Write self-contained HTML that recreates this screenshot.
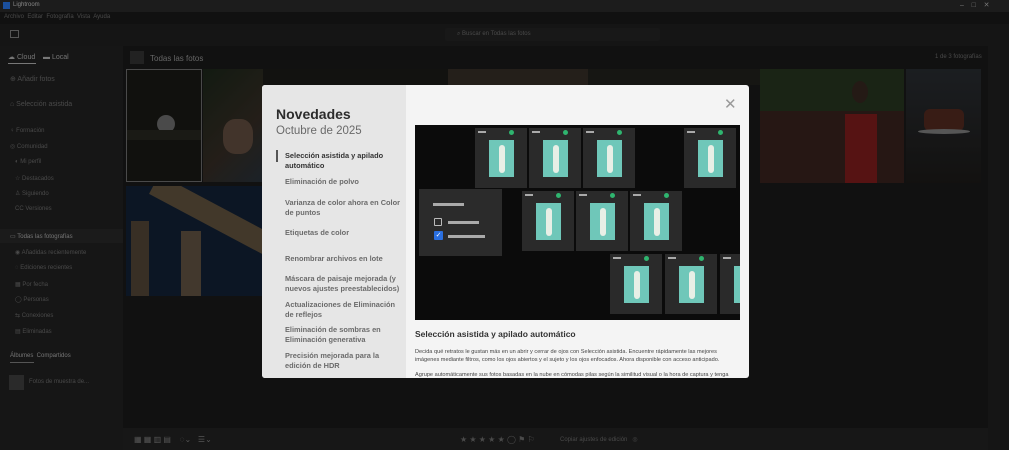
<!DOCTYPE html>
<html><head><meta charset="utf-8"><style>
*{margin:0;padding:0;box-sizing:border-box}
body{width:1009px;height:450px;overflow:hidden;background:#111;font-family:"Liberation Sans",sans-serif;position:relative}
.a{position:absolute}
.t{color:#4a4a4a;font-size:6px;white-space:nowrap}
.ph{position:absolute;overflow:hidden;filter:brightness(0.62)}
.card{position:absolute;width:52px;height:60px;background:#2a2a2a}
.card .im{position:absolute;left:14px;top:12px;width:25px;height:37px;background:#6fc7b9}
.card .im:after{content:"";position:absolute;left:10px;top:5px;width:6px;height:28px;background:#e8efe6;border-radius:3px}
.card .bar{position:absolute;left:3px;top:3px;width:8px;height:1.5px;background:#aaa}
.card .ck{position:absolute;right:13px;top:2px;width:5px;height:5px;border-radius:50%;background:#2fb56f}
.it{position:absolute;left:285px;font-size:7.4px;line-height:10px;color:#6b6b6b;font-weight:bold;width:118px}
</style></head><body>
<div class="a" style="left:0;top:0;width:1009px;height:12px;background:#1c1c1c"></div>
<div class="a" style="left:3px;top:2px;width:7px;height:7px;background:#1b4f9c"></div>
<div class="a t" style="left:13px;top:2px;color:#888">Lightroom</div>
<div class="a t" style="left:960px;top:1px;color:#777;font-size:7px">–&nbsp;&nbsp;&nbsp;&nbsp;□&nbsp;&nbsp;&nbsp;&nbsp;✕</div>
<div class="a t" style="left:4px;top:14px">Archivo&nbsp; Editar&nbsp; Fotografía&nbsp; Vista&nbsp; Ayuda</div>
<div class="a" style="left:0;top:24px;width:1009px;height:22px;background:#151515"></div>
<div class="a" style="left:10px;top:30px;width:9px;height:8px;border:1px solid #555"></div>
<div class="a" style="left:445px;top:28px;width:215px;height:13px;background:#181818;border-radius:2px"></div>
<div class="a t" style="left:457px;top:31px">⌕ Buscar en Todas las fotos</div>
<div class="a" style="left:0;top:46px;width:123px;height:404px;background:#161616"></div>
<div class="a t" style="left:8px;top:53px;color:#777;font-size:7px">☁ Cloud&nbsp;&nbsp;&nbsp; ▬ Local</div>
<div class="a" style="left:8px;top:63px;width:28px;height:1px;background:#777"></div>
<div class="a t" style="left:10px;top:75px;font-size:7px">⊕ Añadir fotos</div>
<div class="a t" style="left:10px;top:101px;font-size:7px">⌂ Selección asistida</div>
<div class="a t" style="left:10px;top:128px">♀ Formación</div>
<div class="a t" style="left:10px;top:143px">◎ Comunidad</div>
<div class="a t" style="left:15px;top:159px">◐ Mi perfil</div>
<div class="a t" style="left:15px;top:175px">☆ Destacados</div>
<div class="a t" style="left:15px;top:190px">♙ Siguiendo</div>
<div class="a t" style="left:15px;top:206px">CC Versiones</div>
<div class="a" style="left:0;top:229px;width:123px;height:14px;background:#1b1b1b"></div>
<div class="a t" style="left:10px;top:233px;color:#777">▭ Todas las fotografías</div>
<div class="a t" style="left:15px;top:249px">◉ Añadidas recientemente</div>
<div class="a t" style="left:15px;top:265px">◌ Ediciones recientes</div>
<div class="a t" style="left:15px;top:281px">▦ Por fecha</div>
<div class="a t" style="left:15px;top:296px">◯ Personas</div>
<div class="a t" style="left:15px;top:312px">⇆ Conexiones</div>
<div class="a t" style="left:15px;top:328px">▤ Eliminadas</div>
<div class="a t" style="left:10px;top:353px;color:#777">Álbumes&nbsp; Compartidos</div>
<div class="a" style="left:10px;top:362px;width:24px;height:1px;background:#555"></div>
<div class="a" style="left:9px;top:375px;width:15px;height:15px;background:#2a2a2a"></div>
<div class="a t" style="left:29px;top:379px">Fotos de muestra de...</div>
<div class="a" style="left:130px;top:51px;width:14px;height:13px;background:#222"></div>
<div class="a t" style="left:150px;top:54px;color:#666;font-size:8px">Todas las fotos</div>
<div class="a t" style="left:935px;top:54px">1 de 3 fotografías</div>
<div class="ph" style="left:126px;top:69px;width:76px;height:113px;background:#1c1c16;border:1px solid #777"><div class="a" style="left:30px;top:45px;width:18px;height:18px;background:#777;border-radius:50%"></div><div class="a" style="left:0;top:60px;width:76px;height:10px;background:#2a2a22"></div></div>
<div class="ph" style="left:203px;top:69px;width:60px;height:113px;background:linear-gradient(135deg,#1e2a1c,#3a3128 60%,#2b3640)"><div class="a" style="left:20px;top:50px;width:30px;height:35px;background:#6b5445;border-radius:40%"></div></div>
<div class="ph" style="left:263px;top:69px;width:185px;height:16px;background:#1d1d1a"></div>
<div class="ph" style="left:448px;top:69px;width:140px;height:16px;background:#3a322a"></div>
<div class="ph" style="left:588px;top:69px;width:172px;height:16px;background:#23231e"></div>
<div class="ph" style="left:760px;top:69px;width:144px;height:114px;background:#2a3a22"><div class="a" style="left:0;top:42px;width:144px;height:72px;background:#3e2520"></div><div class="a" style="left:85px;top:45px;width:32px;height:69px;background:#8a1f1f"></div><div class="a" style="left:92px;top:12px;width:16px;height:22px;background:#3a2a22;border-radius:50%"></div></div>
<div class="ph" style="left:906px;top:69px;width:75px;height:114px;background:linear-gradient(#2c3035,#1e1c1a)"><div class="a" style="left:18px;top:40px;width:40px;height:22px;background:#5a2d22;border-radius:6px"></div><div class="a" style="left:12px;top:60px;width:52px;height:5px;background:#8a8a8a;border-radius:50%"></div></div>
<div class="ph" style="left:126px;top:186px;width:136px;height:110px;background:#13243a"><div class="a" style="left:20px;top:20px;width:140px;height:22px;background:#6b5a44;transform:rotate(28deg)"></div><div class="a" style="left:55px;top:45px;width:20px;height:70px;background:#6b5b48"></div><div class="a" style="left:5px;top:35px;width:18px;height:75px;background:#5a4c3c"></div></div>
<div class="a" style="left:988px;top:46px;width:21px;height:404px;background:#151515"></div>
<div class="a" style="left:123px;top:428px;width:865px;height:22px;background:#171717"></div>
<div class="a t" style="left:134px;top:435px;color:#555;font-size:8px">▦ ▦ ▥ ▤&nbsp;&nbsp;&nbsp; ◌⌄&nbsp;&nbsp; ☰⌄</div>
<div class="a t" style="left:460px;top:435px;color:#4a4a4a;font-size:8px">★ ★ ★ ★ ★ ◯ ⚑ ⚐</div>
<div class="a t" style="left:560px;top:436px">Copiar ajustes de edición&nbsp;&nbsp; ◎</div>
<div class="a" style="left:262px;top:85px;width:487px;height:293px;background:#f4f4f4;border-radius:3px;overflow:hidden">
<div class="a" style="left:0;top:0;width:144px;height:293px;background:#e6e6e6"></div>
</div>
<div class="a" style="left:276px;top:106px;font-size:14px;font-weight:bold;color:#2c2c2c">Novedades</div>
<div class="a" style="left:276px;top:125px;font-size:11.5px;color:#6a6a6a">Octubre de 2025</div>
<div class="a" style="left:276px;top:150px;width:2px;height:12px;background:#555"></div>
<div class="it" style="top:151px;color:#333">Selección asistida y apilado automático</div>
<div class="it" style="top:177px">Eliminación de polvo</div>
<div class="it" style="top:198px">Varianza de color ahora en Color de puntos</div>
<div class="it" style="top:228px">Etiquetas de color</div>
<div class="it" style="top:254px">Renombrar archivos en lote</div>
<div class="it" style="top:274px">Máscara de paisaje mejorada (y nuevos ajustes preestablecidos)</div>
<div class="it" style="top:300px">Actualizaciones de Eliminación de reflejos</div>
<div class="it" style="top:325px">Eliminación de sombras en Eliminación generativa</div>
<div class="it" style="top:351px">Precisión mejorada para la edición de HDR</div>
<div class="a" style="left:724px;top:95px;font-size:15px;color:#999">✕</div>
<div class="a" style="left:415px;top:125px;width:325px;height:195px;background:#0b0b0b;overflow:hidden">
<div class="card" style="left:60px;top:3px"><div class="bar"></div><div class="ck"></div><div class="im"></div></div>
<div class="card" style="left:114px;top:3px"><div class="bar"></div><div class="ck"></div><div class="im"></div></div>
<div class="card" style="left:168px;top:3px"><div class="bar"></div><div class="ck"></div><div class="im"></div></div>
<div class="card" style="left:269px;top:3px"><div class="bar"></div><div class="ck"></div><div class="im"></div></div>
<div class="card" style="left:107px;top:66px"><div class="bar"></div><div class="ck"></div><div class="im"></div></div>
<div class="card" style="left:161px;top:66px"><div class="bar"></div><div class="ck"></div><div class="im"></div></div>
<div class="card" style="left:215px;top:66px"><div class="bar"></div><div class="ck"></div><div class="im"></div></div>
<div class="card" style="left:195px;top:129px"><div class="bar"></div><div class="ck"></div><div class="im"></div></div>
<div class="card" style="left:250px;top:129px"><div class="bar"></div><div class="ck"></div><div class="im"></div></div>
<div class="card" style="left:305px;top:129px"><div class="bar"></div><div class="im"></div></div>
<div class="a" style="left:4px;top:64px;width:83px;height:67px;background:#2b2b2b"></div>
<div class="a" style="left:18px;top:78px;width:31px;height:3px;background:#aaa"></div>
<div class="a" style="left:19px;top:93px;width:8px;height:8px;border:1.5px solid #bbb;border-radius:1px"></div>
<div class="a" style="left:33px;top:96px;width:31px;height:2.5px;background:#aaa"></div>
<div class="a" style="left:19px;top:106px;width:9px;height:9px;background:#2a6fe0;border-radius:1px;color:#fff;font-size:7px;line-height:9px;text-align:center">✓</div>
<div class="a" style="left:33px;top:110px;width:37px;height:2.5px;background:#aaa"></div>
</div>
<div class="a" style="left:415px;top:329px;font-size:8.5px;font-weight:bold;color:#333">Selección asistida y apilado automático</div>
<div class="a" style="left:415px;top:349px;width:325px;font-size:5.6px;line-height:7.7px;color:#444">Decida qué retratos le gustan más en un abrir y cerrar de ojos con Selección asistida. Encuentre rápidamente las mejores imágenes mediante filtros, como los ojos abiertos y el sujeto y los ojos enfocados. Ahora disponible con acceso anticipado.</div>
<div class="a" style="left:415px;top:372px;width:325px;height:6px;overflow:hidden;font-size:5.6px;line-height:7.7px;color:#444;white-space:nowrap">Agrupe automáticamente sus fotos basadas en la nube en cómodas pilas según la similitud visual o la hora de captura y tenga</div>
</body></html>
